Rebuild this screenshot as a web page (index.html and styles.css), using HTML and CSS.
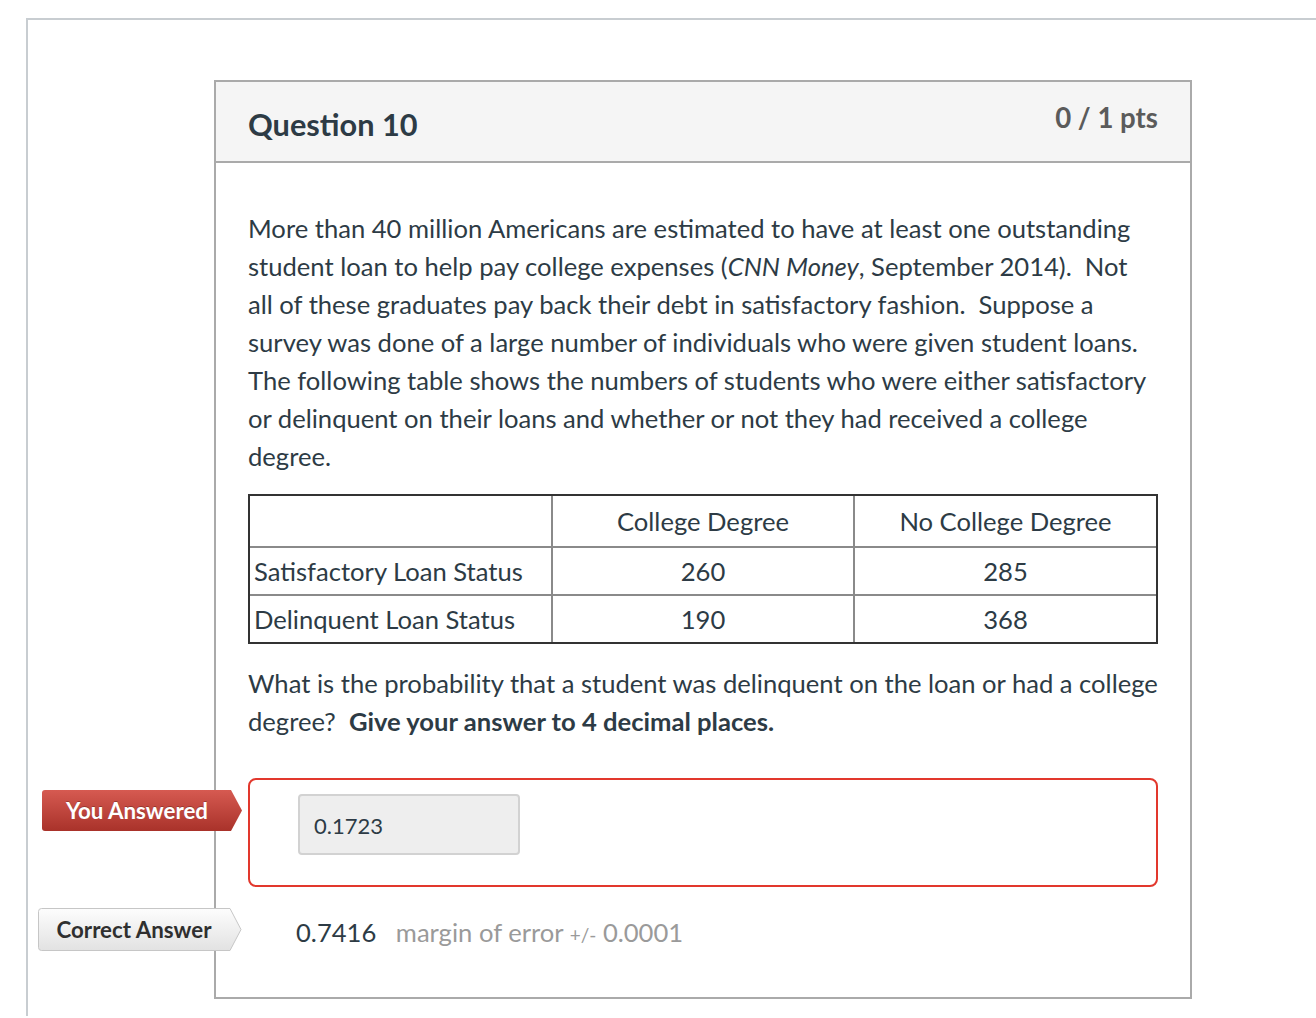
FILE: index.html
```html
<!DOCTYPE html>
<html lang="en">
<head>
<meta charset="utf-8">
<title>Question 10</title>
<link rel="stylesheet" href="styles.css">
</head>
<body>
<div class="page">
  <div class="question">
    <div class="q-header">
      <h2 class="q-title">Question 10</h2>
      <div class="q-points">0 / 1 pts</div>
    </div>
    <div class="q-body">
      <p class="intro">More than 40 million Americans are estimated to have at least one outstanding<br>student loan to help pay college expenses (<em>CNN Money</em>, September 2014).&nbsp; Not<br>all of these graduates pay back their debt in satisfactory fashion.&nbsp; Suppose a<br>survey was done of a large number of individuals who were given student loans.<br>The following table shows the numbers of students who were either satisfactory<br>or delinquent on their loans and whether or not they had received a college<br>degree.</p>
      <table class="data">
        <colgroup>
          <col class="c1">
          <col class="c2">
          <col class="c3">
        </colgroup>
        <tr class="head">
          <td></td>
          <td class="num">College Degree</td>
          <td class="num">No College Degree</td>
        </tr>
        <tr>
          <td>Satisfactory Loan Status</td>
          <td class="num">260</td>
          <td class="num">285</td>
        </tr>
        <tr>
          <td>Delinquent Loan Status</td>
          <td class="num">190</td>
          <td class="num">368</td>
        </tr>
      </table>
      <p class="ask">What is the probability that a student was delinquent on the loan or had a college<br>degree?&nbsp; <strong>Give your answer to 4 decimal places.</strong></p>

      <div class="answer you">
        <div class="tag tag-wrong">
          <svg class="tag-shape" viewBox="0 0 200 41" preserveAspectRatio="none" aria-hidden="true">
            <defs>
              <linearGradient id="gRed" x1="0" y1="0" x2="0" y2="1">
                <stop offset="0" stop-color="#d65a51"/>
                <stop offset="1" stop-color="#a9322a"/>
              </linearGradient>
            </defs>
            <path d="M3,0 H189 L200,20.5 L189,41 H3 Q0,41 0,38 V3 Q0,0 3,0 Z" fill="url(#gRed)"/>
          </svg>
          <span class="tag-text">You Answered</span>
        </div>
        <input class="answer-input" type="text" value="0.1723" readonly>
      </div>

      <div class="answer correct">
        <div class="tag tag-right">
          <svg class="tag-shape" viewBox="0 0 204 43" preserveAspectRatio="none" aria-hidden="true">
            <defs>
              <linearGradient id="gGray" x1="0" y1="0" x2="0" y2="1">
                <stop offset="0" stop-color="#fdfdfd"/>
                <stop offset="1" stop-color="#e2e2e2"/>
              </linearGradient>
            </defs>
            <path d="M3.5,0.5 H192 L203,21.5 L192,42.5 H3.5 Q0.5,42.5 0.5,39.5 V3.5 Q0.5,0.5 3.5,0.5 Z" fill="url(#gGray)" stroke="#c6c6c6" stroke-width="1"/>
          </svg>
          <span class="tag-text">Correct Answer</span>
        </div>
        <span class="correct-value">0.7416</span>
        <span class="margin">margin of error <span class="pm">+/-</span> 0.0001</span>
      </div>
    </div>
  </div>
</div>
</body>
</html>
```

FILE: styles.css
```css
html, body {
  margin: 0;
  padding: 0;
  background: #ffffff;
}

body {
  font-family: Lato, "Open Sans", "Liberation Sans", sans-serif;
  color: #2d3b45;
  overflow: hidden;
}

.page {
  margin: 18px 0 0 26px;
  border-top: 2px solid #c8cdd1;
  border-left: 2px solid #c8cdd1;
  height: 998px;
  padding-top: 60px;
  box-sizing: border-box;
}

.question {
  margin-left: 186px;
  width: 978px;
  border: 2px solid #aaaaaa;
  box-sizing: border-box;
}

.q-header {
  display: flex;
  justify-content: space-between;
  align-items: flex-start;
  height: 81px;
  box-sizing: border-box;
  padding: 17px 32px 0 32px;
  background: #f5f5f5;
  border-bottom: 2px solid #aaaaaa;
}

.q-title {
  margin: 7px 0 0 0;
  font-size: 30.7px;
  line-height: 38px;
  font-weight: 700;
  color: #2d3b45;
}

.q-points {
  font-size: 27.6px;
  line-height: 38px;
  font-weight: 700;
  color: #5b5b5b;
}

.q-body {
  padding: 46px 32px 43px 32px;
  font-size: 25.6px;
  line-height: 38px;
}

.intro {
  margin: 0 0 19px 0;
  white-space: nowrap;
}

.data {
  width: 910px;
  table-layout: fixed;
  border-collapse: separate;
  border-spacing: 0;
  border: 2px solid #333333;
  margin: 0 0 20px 0;
  font-size: 25.6px;
}

.data col.c1 { width: 303px; }
.data col.c2 { width: 302px; }
.data col.c3 { width: 301px; }

.data td {
  padding: 8px 4px;
  line-height: 30px;
  border-right: 2px solid #8a8a8a;
  border-bottom: 2px solid #8a8a8a;
  white-space: nowrap;
}

.data td:last-child { border-right: none; }
.data tr:last-child td { border-bottom: none; }

.data tr.head td {
  padding-top: 10px;
  padding-bottom: 10px;
}

.data td.num { text-align: center; }

.ask {
  margin: 0 0 38px 0;
  white-space: nowrap;
}

.answer {
  position: relative;
}

.answer.you {
  border: 2px solid #e2382d;
  border-radius: 8px;
  padding: 14px 0 30px 48px;
}

.answer-input {
  display: block;
  width: 222px;
  height: 61px;
  box-sizing: border-box;
  margin: 0;
  padding: 2px 0 0 14px;
  border: 2px solid #d2d2d2;
  border-radius: 4px;
  background: #eeeeee;
  font-family: Lato, "Open Sans", "Liberation Sans", sans-serif;
  font-size: 22px;
  color: #2d3b45;
  outline: none;
}

.answer.correct {
  margin-top: 21px;
  padding: 5px 0 0 48px;
  line-height: 38px;
}

.correct-value {
  color: #2d3b45;
  margin-right: 13px;
}

.margin {
  color: #9a9a9a;
}

.pm {
  font-size: 19px;
}

.tag {
  position: absolute;
  display: flex;
  align-items: center;
  justify-content: center;
  box-sizing: border-box;
  font-weight: 700;
  font-size: 22.3px;
}

.tag-shape {
  position: absolute;
  left: 0;
  top: 0;
  width: 100%;
  height: 100%;
}

.tag-text {
  position: relative;
  line-height: 1;
  top: 1px;
}

.tag-wrong {
  left: -208px;
  top: 10px;
  width: 200px;
  height: 41px;
  padding-right: 10px;
  color: #ffffff;
}

.tag-wrong .tag-text {
  text-shadow: 0 -1px 0 rgba(0, 0, 0, 0.25);
}

.tag-right {
  left: -210px;
  top: 0;
  width: 204px;
  height: 43px;
  padding-right: 12px;
  color: #2f2f2f;
}
```
